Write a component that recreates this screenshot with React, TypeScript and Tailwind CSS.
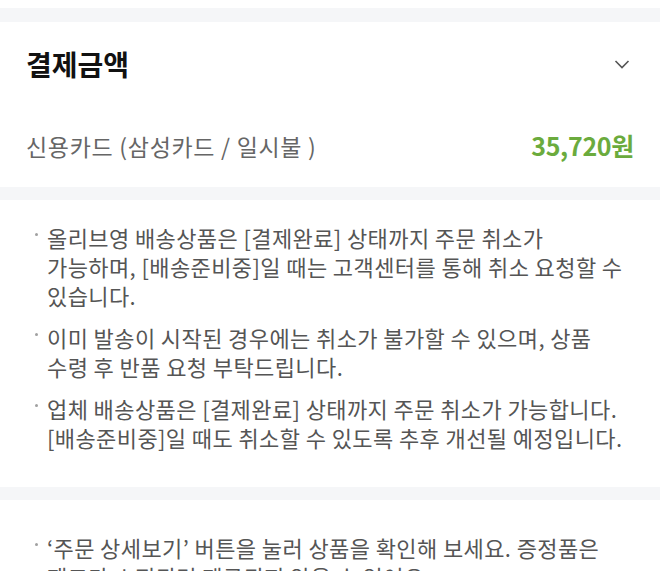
import React from "react";

const font = { fontFamily: '"Noto Sans CJK KR", "Noto Sans", sans-serif' };

function Bullet({ children }: { children: React.ReactNode }) {
  return (
    <li className="flex text-[22px] leading-[29px] text-[#555555] tracking-[0.4px] break-keep">
      <span className="w-[21px] shrink-0 flex items-start">
        <span className="mt-[10px] ml-[9px] w-[3px] h-[3px] rounded-full bg-[#a0a0a0]" />
      </span>
      <span>{children}</span>
    </li>
  );
}

export default function App() {
  return (
    <div className="w-[660px] h-[571px] overflow-hidden bg-white" style={font}>
      <div className="h-[8px] bg-white" />
      <div className="h-[14px] bg-[#f5f6f8]" />
      <section className="px-[26px] pt-[24px] pb-[26px]">
        <div className="flex items-center justify-between h-[36px]">
          <h2 className="text-[28px] font-bold text-[#111111] tracking-[0px]">결제금액</h2>
          <svg width="20" height="20" viewBox="0 0 20 20" className="mr-[2px]">
            <path d="M3.5 7 L10 13.5 L16.5 7" fill="none" stroke="#555555" strokeWidth="1.6" />
          </svg>
        </div>
        <div className="mt-[49px] flex items-center justify-between h-[30px]">
          <span className="text-[23px] text-[#666666] tracking-[0.7px]">신용카드 (삼성카드 / 일시불 )</span>
          <span className="text-[25px] font-bold text-[#6bab3d] tracking-[-0.3px]">35,720원</span>
        </div>
      </section>
      <div className="h-[13px] bg-[#f5f6f8]" />
      <section className="pl-[26px] pr-[26px] pt-[23px] pb-[35px]">
        <ul className="flex flex-col gap-[13px]">
          <Bullet>올리브영 배송상품은 [결제완료] 상태까지 주문 취소가 가능하며, [배송준비중]일 때는 고객센터를 통해 취소 요청할 수 있습니다.</Bullet>
          <Bullet>이미 발송이 시작된 경우에는 취소가 불가할 수 있으며, 상품 수령 후 반품 요청 부탁드립니다.</Bullet>
          <Bullet>업체 배송상품은 [결제완료] 상태까지 주문 취소가 가능합니다. [배송준비중]일 때도 취소할 수 있도록 추후 개선될 예정입니다.</Bullet>
        </ul>
      </section>
      <div className="h-[13px] bg-[#f5f6f8]" />
      <section className="pl-[26px] pr-[26px] pt-[33px]">
        <ul className="flex flex-col gap-[13px]">
          <Bullet>‘주문 상세보기’ 버튼을 눌러 상품을 확인해 보세요. 증정품은 재고가 소진되면 제공되지 않을 수 있어요.</Bullet>
        </ul>
      </section>
    </div>
  );
}
